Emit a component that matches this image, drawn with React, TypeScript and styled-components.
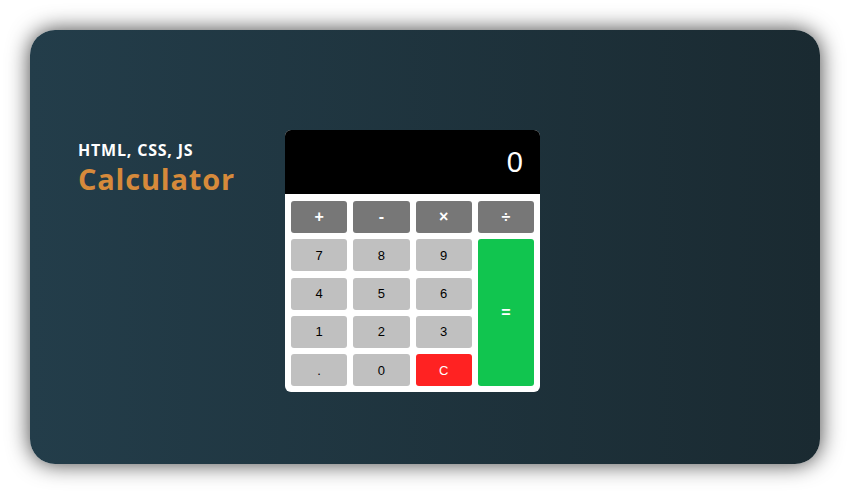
import React, { useState } from 'react';
import styled, { createGlobalStyle } from 'styled-components';

const GlobalStyle = createGlobalStyle`
    html, body {
        margin: 0;
        padding: 0;
        background: #ffffff;
    }
`

const Page = styled.div`
    width: 850px;
    height: 494px;
    padding: 30px;
    box-sizing: border-box;
`
const Card = styled.div`
    width: 790px;
    height: 434px;
    border-radius: 25px;
    background: linear-gradient(90deg, #233d4a 0%, #1a2a31 100%);
    box-shadow: 0 0 22px rgba(0, 0, 0, 0.75);
    display: flex;
    align-items: flex-start;
    padding: 100px 0 0 48px;
    box-sizing: border-box;
`
const Heading = styled.div`
    width: 207px;
    margin-top: 8px;
    font-family: "Open Sans", sans-serif;
    font-weight: 700;
`
const Subtitle = styled.div`
    color: #ffffff;
    font-size: 16px;
    line-height: 24px;
    letter-spacing: 0.8px;
`
const Title = styled.div`
    color: #d68a3b;
    font-size: 29px;
    line-height: 34px;
    letter-spacing: 0.8px;
`
const Calc = styled.div`
    width: 255px;
    background: #ffffff;
    border-radius: 6px;
    overflow: hidden;
`
const Display = styled.div`
    height: 64px;
    background: #000000;
    color: #ffffff;
    display: flex;
    align-items: center;
    justify-content: flex-end;
    padding-right: 17px;
    font-family: "Liberation Sans", Arial, sans-serif;
    font-size: 29px;
`
const Keys = styled.div`
    display: grid;
    grid-template-columns: repeat(4, 1fr);
    grid-auto-rows: 32px;
    column-gap: 6px;
    row-gap: 6.25px;
    padding: 7px 6px 6px;
`
const Key = styled.button<{ $kind?: 'op' | 'num' | 'eq' | 'clear' }>`
    border: none;
    border-radius: 3px;
    padding: 0;
    font-family: "Liberation Sans", Arial, sans-serif;
    cursor: pointer;
    font-size: ${p => (p.$kind === 'op' || p.$kind === 'eq') ? '16px' : '13px'};
    font-weight: ${p => (p.$kind === 'op' || p.$kind === 'eq') ? 700 : 400};
    color: ${p => p.$kind === 'num' ? '#000000' : '#ffffff'};
    background: ${p => p.$kind === 'op' ? '#777777'
        : p.$kind === 'eq' ? '#11c54f'
        : p.$kind === 'clear' ? '#ff2222' : '#c0c0c0'};
    ${p => p.$kind === 'eq' ? 'grid-row: 2 / span 4; grid-column: 4;' : ''}
`

const App = () => {
    const [value, setValue] = useState('0')
    const press = (k: string) => {
        if (k === 'C') return setValue('0')
        if (k === '=') {
            try {
                const expr = value.replace(/×/g, '*').replace(/÷/g, '/')
                // eslint-disable-next-line no-new-func
                setValue(String(Function('return (' + expr + ')')()))
            } catch {
                setValue('0')
            }
            return
        }
        setValue(value === '0' && k !== '.' ? k : value + k)
    }

    const ops = ['+', '-', '×', '÷']
    const nums = ['7', '8', '9', '4', '5', '6', '1', '2', '3', '.', '0']

    return (
        <Page>
            <GlobalStyle />
            <Card>
                <Heading>
                    <Subtitle>HTML, CSS, JS</Subtitle>
                    <Title>Calculator</Title>
                </Heading>
                <Calc>
                    <Display>{value}</Display>
                    <Keys>
                        {ops.map(o => <Key key={o} $kind="op" onClick={() => press(o)}>{o}</Key>)}
                        <Key $kind="eq" onClick={() => press('=')}>=</Key>
                        {nums.map(n => <Key key={n} $kind="num" onClick={() => press(n)}>{n}</Key>)}
                        <Key $kind="clear" onClick={() => press('C')}>C</Key>
                    </Keys>
                </Calc>
            </Card>
        </Page>
    )
}

export default App;
